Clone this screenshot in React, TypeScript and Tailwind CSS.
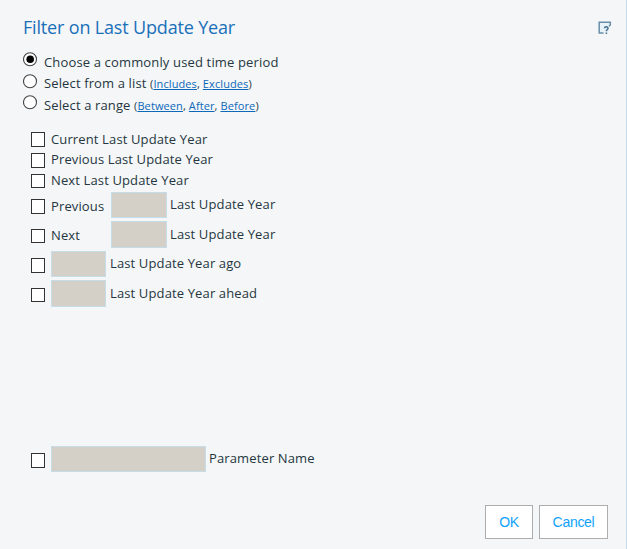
import React from "react";

const links = "text-[11px] tracking-[0.1px]";

function Link({ children }: { children: string }) {
  return <a className="text-[#0c68b8] underline">{children}</a>;
}

function Radio({ checked = false, className = "" }: { checked?: boolean; className?: string }) {
  return (
    <svg className={`mr-[6px] h-[15px] w-[15px] shrink-0 ${className}`} viewBox="0 0 15 15">
      <circle cx="7" cy="7.3" r="6.5" fill="#fff" stroke="#454545" strokeWidth="1.1" />
      {checked && <circle cx="7.2" cy="7.3" r="3.8" fill="#000" />}
    </svg>
  );
}

function Check({ className = "" }: { className?: string }) {
  return <span className={`mr-[6px] w-[14px] shrink-0 border border-[#333333] bg-white ${className}`} />;
}

function Field({ className = "" }: { className?: string }) {
  return <span className={`shrink-0 border border-[#c5dce9] bg-[#d4d0c8] ${className}`} />;
}

export default function App() {
  return (
    <div className="flex h-[549px] w-[627px] flex-col overflow-hidden border-r border-[#c8dceb] bg-[#f4f6f8] font-['Open_Sans',sans-serif] text-[13px] leading-[18px] tracking-[0.13px] whitespace-nowrap text-[#263640]">
      <header className="flex h-[52px] shrink-0 items-start justify-between pt-[15px] pr-[14px] pl-[23px]">
        <h1 className="text-[18px] leading-[24px] tracking-[-0.17px] text-[#1a70b8]">Filter on Last Update Year</h1>
        <svg className="mt-[6px] h-[14px] w-[14px]" viewBox="0 0 14 14" fill="none" stroke="#6a8ea8" strokeWidth="1.5">
          <path d="M1.2 1.2H12V4L10 12H1.2Z" fill="#e6f1f8" stroke="none" />
          <path d="M5.5 12H1.2V1.2H12.3V4L11 5.2" />
          <path d="M6.5 7.2C6.5 5.2 10 5.2 10 7.2C10 8.6 8.4 8.4 8.4 10.2M8.4 11.4V13" stroke="#47718f" />
        </svg>
      </header>

      <div className="flex flex-col pl-[23px]">
        <label className="flex h-[22px] items-start">
          <Radio checked />
          <span className="mt-[1px] tracking-[0.15px]">Choose a commonly used time period</span>
        </label>
        <label className="flex h-[21px] items-start">
          <Radio />
          <span>Select from a list <span className={links}>(<Link>Includes</Link>, <Link>Excludes</Link>)</span></span>
        </label>
        <label className="flex h-[37px] items-start">
          <Radio />
          <span className="mt-[1px]">Select a range <span className={links}>(<Link>Between</Link>, <Link>After</Link>, <Link>Before</Link>)</span></span>
        </label>
      </div>

      <div className="flex flex-col pl-[31px]">
        <label className="flex h-[21px] items-start">
          <Check className="h-[15px]" />
          <span className="mt-[-2px]">Current Last Update Year</span>
        </label>
        <label className="flex h-[21px] items-start">
          <Check className="h-[15px]" />
          <span className="mt-[-3px]">Previous Last Update Year</span>
        </label>
        <label className="flex h-[18px] items-start">
          <Check className="h-[14px]" />
          <span className="mt-[-3px]">Next Last Update Year</span>
        </label>
        <label className="flex h-[29px] items-start">
          <Check className="mt-[7px] h-[15px]" />
          <span className="mt-[5px] w-[60px]">Previous</span>
          <Field className="mr-[3px] h-[26px] w-[56px]" />
          <span className="mt-[3px]">Last Update Year</span>
        </label>
        <label className="flex h-[30px] items-start">
          <Check className="mt-[8px] h-[14px]" />
          <span className="mt-[5px] w-[60px]">Next</span>
          <Field className="mr-[3px] h-[27px] w-[56px]" />
          <span className="mt-[4px]">Last Update Year</span>
        </label>
        <label className="flex h-[29px] items-start">
          <Check className="mt-[7px] h-[15px]" />
          <Field className="mr-[4px] h-[26px] w-[55px]" />
          <span className="mt-[3px]">Last Update Year ago</span>
        </label>
        <label className="flex h-[166px] items-start">
          <Check className="mt-[8px] h-[14px]" />
          <Field className="mr-[4px] h-[27px] w-[55px]" />
          <span className="mt-[4px]">Last Update Year ahead</span>
        </label>
        <label className="flex h-[26px] items-start">
          <Check className="mt-[7px] h-[15px]" />
          <Field className="mr-[3px] h-[26px] w-[155px]" />
          <span className="mt-[3px]">Parameter Name</span>
        </label>
      </div>

      <footer className="mt-[33px] flex h-[34px] shrink-0 justify-end gap-[6px] pr-[18px] font-['Liberation_Sans',Arial,sans-serif] text-[14px] tracking-[-0.3px] text-[#10a2fb]">
        <button className="w-[48px] border border-[#adadad] bg-white">OK</button>
        <button className="w-[69px] border border-[#adadad] bg-white">Cancel</button>
      </footer>
    </div>
  );
}
